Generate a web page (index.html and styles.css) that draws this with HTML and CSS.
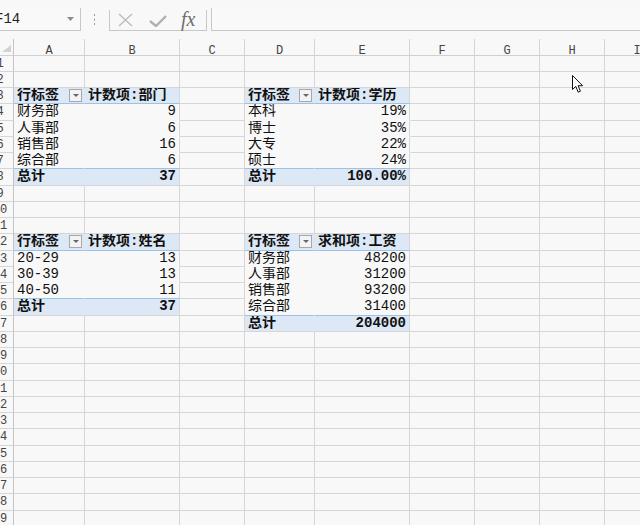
FILE: index.html
```html
<!DOCTYPE html>
<html lang="zh-CN">
<head>
  <meta charset="UTF-8" />
  <title>数据透视表</title>
  <link rel="stylesheet" href="styles.css">
</head>
<body>
  <div class="formula-bar">
    <div class="name-box">
      <span class="name-text">F14</span>
      <svg class="name-drop" width="7" height="4" viewBox="0 0 7 4"><path d="M0 0h7L3.5 4z" fill="#8a8a8a"/></svg>
    </div>
    <svg class="grip" width="3" height="11" viewBox="0 0 3 11">
      <rect x="1" y="0" width="1" height="2" fill="#9a9a9a"/>
      <rect x="1" y="4.5" width="1" height="2" fill="#9a9a9a"/>
      <rect x="1" y="9" width="1" height="2" fill="#9a9a9a"/>
    </svg>
    <div class="fx-tools">
      <svg class="tool-x" width="15" height="14" viewBox="0 0 15 14">
        <path d="M1 1L14 13M14 1L1 13" stroke="#bdbdbd" stroke-width="1.4" fill="none"/>
      </svg>
      <svg class="tool-ok" width="18" height="12" viewBox="0 0 18 12">
        <path d="M1 6l6 5L17 1" stroke="#b0b0b0" stroke-width="2.4" fill="none"/>
      </svg>
      <span class="fx">fx</span>
    </div>
    <div class="formula-input"></div>
  </div>

  <div class="sheet" id="sheet"></div>

  <svg class="pointer" width="12" height="19" viewBox="0 0 12 19">
    <path d="M0.5 0.5V14.5L3.8 11.4L6.2 17.2L8.4 16.2L6.1 10.7H10.6Z" fill="#fff" stroke="#111" stroke-width="1"/>
  </svg>

  <script>
    const COLS = ["A", "B", "C", "D", "E", "F", "G", "H", "I"];
    const ROWS = 29;

    // pivot tables: top-left row, column index (A = 1)
    const pivots = [
      { row: 3, col: 1, field: "计数项:部门", total: "37",
        items: [["财务部", "9"], ["人事部", "6"], ["销售部", "16"], ["综合部", "6"]] },
      { row: 3, col: 4, field: "计数项:学历", total: "100.00%",
        items: [["本科", "19%"], ["博士", "35%"], ["大专", "22%"], ["硕士", "24%"]] },
      { row: 12, col: 1, field: "计数项:姓名", total: "37",
        items: [["20-29", "13"], ["30-39", "13"], ["40-50", "11"]] },
      { row: 12, col: 4, field: "求和项:工资", total: "204000",
        items: [["财务部", "48200"], ["人事部", "31200"], ["销售部", "93200"], ["综合部", "31400"]] }
    ];

    const cells = {};
    function put(r, c, text, cls) {
      cells[r + ":" + c] = { text, cls };
    }

    pivots.forEach(p => {
      put(p.row, p.col, "行标签", "pv-head pv-label has-drop");
      put(p.row, p.col + 1, p.field, "pv-head");
      p.items.forEach(([name, value], i) => {
        const last = i === p.items.length - 1 ? " pv-last" : "";
        put(p.row + 1 + i, p.col, name, "pv-item pv-label" + last);
        put(p.row + 1 + i, p.col + 1, value, "pv-item num" + last);
      });
      const t = p.row + 1 + p.items.length;
      put(t, p.col, "总计", "pv-total pv-label");
      put(t, p.col + 1, p.total, "pv-total num");
    });

    let html = '<div class="corner"><svg width="9" height="7" viewBox="0 0 9 7"><path d="M9 0V7H0z" fill="#d2d2d2"/></svg></div>';
    COLS.forEach(c => { html += '<div class="ch">' + c + '</div>'; });

    for (let r = 1; r <= ROWS; r++) {
      html += '<div class="rh"><span>' + r + '</span></div>';
      for (let c = 1; c <= COLS.length; c++) {
        const cell = cells[r + ":" + c];
        if (!cell) {
          html += '<div class="cell"></div>';
        } else if (cell.cls.indexOf("has-drop") >= 0) {
          html += '<div class="cell ' + cell.cls + '"><span>' + cell.text + '</span><span class="drop"></span></div>';
        } else {
          html += '<div class="cell ' + cell.cls + '">' + cell.text + '</div>';
        }
      }
    }
    document.getElementById("sheet").innerHTML = html;
  </script>
</body>
</html>
```

FILE: styles.css
```css
html, body {
  margin: 0;
  padding: 0;
}
body {
  width: 640px;
  height: 525px;
  overflow: hidden;
  background: #f8f8f8;
  color: #111;
  font-family: "Liberation Mono", "Noto Sans CJK SC", monospace;
}

/* formula bar */
.formula-bar {
  display: flex;
  align-items: flex-end;
  height: 31px;
  box-sizing: border-box;
}
.name-box {
  display: flex;
  align-items: center;
  width: 88px;
  height: 23px;
  margin-left: -7px;
  padding-left: 1px;
  box-sizing: border-box;
  border: 1px solid #c8c8c8;
  border-top: none;
  background: #f9f9f9;
  font-size: 14px;
  color: #222;
}
.name-drop {
  margin-left: auto;
  margin-right: 6px;
}
.grip {
  margin: 0 0 6px 12px;
  align-self: flex-end;
}
.fx-tools {
  display: flex;
  align-items: center;
  width: 98px;
  height: 21px;
  margin-left: 13px;
  box-sizing: border-box;
  border-left: 1px solid #c8c8c8;
  border-right: 1px solid #c8c8c8;
  border-bottom: 1px solid #c8c8c8;
}
.tool-x {
  margin-left: 8px;
}
.tool-ok {
  margin-left: 16px;
  margin-top: 2px;
}
.fx {
  margin-left: 14px;
  font-family: "Liberation Serif", serif;
  font-style: italic;
  font-size: 20px;
  line-height: 18px;
  color: #6e6e6e;
  margin-top: -2px;
}
.formula-input {
  flex: 1;
  height: 23px;
  margin-left: 4px;
  margin-right: -2px;
  box-sizing: border-box;
  border: 1px solid #c8c8c8;
  border-top: none;
  background: #f9f9f9;
}

/* sheet grid */
.sheet {
  display: grid;
  grid-template-columns: 14px 71px 95px 65px 70px 95px 65px 65px 65px 65px;
  grid-template-rows: 17px repeat(29, 16.25px);
  margin-top: 7.5px;
}
.corner {
  display: flex;
  align-items: flex-end;
  justify-content: flex-end;
  padding: 0 2px 3px 0;
  box-sizing: border-box;
  border-right: 1px solid #c4c4c4;
  border-bottom: 1px solid #d0d0d0;
}
.ch {
  box-sizing: border-box;
  border-right: 1px solid #d4d4d4;
  border-bottom: 1px solid #d0d0d0;
  text-align: center;
  font-size: 12px;
  line-height: 14px;
  padding-top: 5px;
  color: #444;
}
.rh {
  box-sizing: border-box;
  overflow: hidden;
  border-right: 1px solid #c4c4c4;
  border-bottom: 1px solid #d6d6d6;
}
.rh span {
  display: block;
  width: 28px;
  margin-left: -14px;
  text-align: center;
  font-size: 12px;
  line-height: 16px;
  color: #444;
}
.cell {
  display: flex;
  align-items: center;
  box-sizing: border-box;
  min-width: 0;
  overflow: hidden;
  white-space: nowrap;
  padding: 0 3px 0 3px;
  border-right: 1px solid #d6d6d6;
  border-bottom: 1px solid #d6d6d6;
  font-size: 14px;
  line-height: 15px;
  color: #111;
}

/* pivot table styling */
.pv-head,
.pv-total {
  background: #dce8f5;
  font-weight: bold;
}
.pv-head {
  border-bottom-color: #9cc2e5;
}
.pv-label {
  border-right-color: transparent;
}
.pv-item {
  border-bottom-color: transparent;
}
.pv-last {
  border-bottom-color: #9cc2e5;
}
.num {
  justify-content: flex-end;
}
.has-drop {
  padding-right: 2px;
}
.drop {
  display: flex;
  align-items: center;
  justify-content: center;
  width: 13px;
  height: 13px;
  margin-left: auto;
  box-sizing: border-box;
  border: 1px solid #a8a8a8;
  background: #f3f3f3;
}
.drop::after {
  content: "";
  border-left: 3px solid transparent;
  border-right: 3px solid transparent;
  border-top: 3px solid #666;
}

/* mouse pointer over the sheet */
.pointer {
  position: absolute;
  left: 572px;
  top: 75px;
}
```
